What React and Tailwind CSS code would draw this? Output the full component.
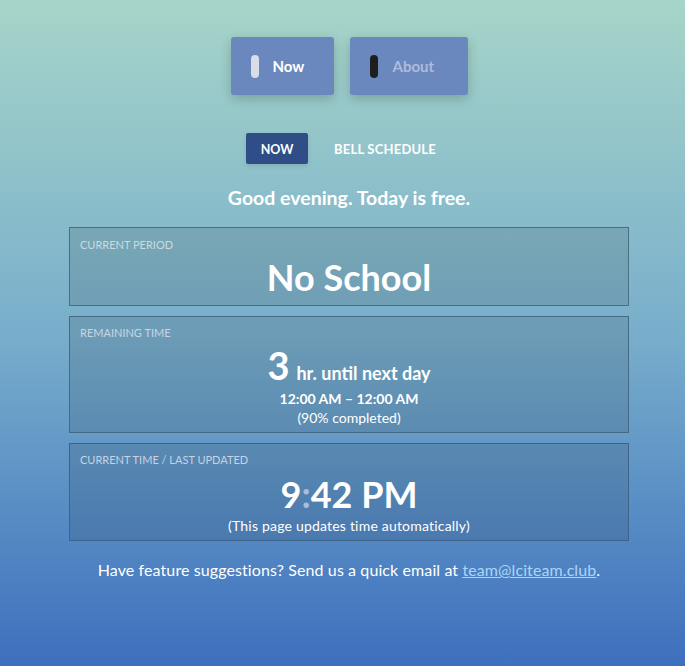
export default function App() {
  const font = { fontFamily: "Lato, 'Open Sans', sans-serif" };
  return (
    <div
      className="min-h-[666px] w-full bg-gradient-to-b from-[#a6d5c8] via-[#79aecb] to-[#3d6fbd] text-white pl-[13px]"
      style={font}
    >
      <div className="flex flex-col items-center pt-[37px]">
        <div className="flex gap-4">
          <div className="flex items-center w-[103px] h-[58px] rounded-[3px] bg-[#6a88be] shadow-[0_4px_12px_rgba(0,0,0,0.2)] pl-5">
            <span className="w-2 h-[23px] rounded-full bg-[#d8dde8]"></span>
            <span className="ml-[14px] text-[15px] font-bold text-white leading-[18px] -mt-[1px]">Now</span>
          </div>
          <div className="flex items-center w-[118px] h-[58px] rounded-[3px] bg-[#6a88be] shadow-[0_4px_12px_rgba(0,0,0,0.2)] pl-5">
            <span className="w-2 h-[23px] rounded-full bg-[#1e1e1e]"></span>
            <span className="ml-[15px] text-[15px] font-bold text-[#aebbdc] leading-[18px] -mt-[1px]">About</span>
          </div>
        </div>

        <div className="flex mt-[38px]">
          <div className="h-[31px] w-[62px] justify-center flex items-center bg-[#2f4e88] rounded-[2px] text-[12.5px] font-bold shadow-[0_2px_4px_rgba(0,0,0,0.1)] pt-[3px]">NOW</div>
          <div className="h-[31px] pl-[26px] pr-4 flex items-center text-[13px] font-bold tracking-[0.2px] pt-[3px]">BELL SCHEDULE</div>
        </div>

        <div className="mt-[22px] text-[19.5px] font-bold leading-[24px]">Good evening. Today is free.</div>

        <div className="w-[560px] mt-[17px] flex flex-col gap-[10px]">
          <div className="h-[79px] border border-[#4a6f82] bg-black/10 px-[10px] pt-[10px]">
            <div className="text-[11px] text-[#c8dbe0] leading-[14px]">CURRENT PERIOD</div>
            <div className="text-center text-[36px] font-bold leading-[40px] mt-[5px]">No School</div>
          </div>

          <div className="h-[117px] border border-[#466a86] bg-black/10 px-[10px] pt-[9px]">
            <div className="text-[11px] text-[#c8d6e2] leading-[14px]">REMAINING TIME</div>
            <div className="flex items-baseline justify-center mt-[7px] leading-[36px]">
              <span className="text-[38px] font-bold">3</span>
              <span className="text-[18px] font-bold ml-[7px]">hr. until next day</span>
            </div>
            <div className="text-center text-[14px] font-bold leading-[18px] -mt-[1px]">12:00 AM – 12:00 AM</div>
            <div className="text-center text-[14px] leading-[18px] mt-[1px]">(90% completed)</div>
          </div>

          <div className="h-[98px] border border-[#3f6289] bg-black/10 px-[10px] pt-[9px]">
            <div className="text-[11px] text-[#c5d3e3] leading-[14px]">CURRENT TIME / LAST UPDATED</div>
            <div className="text-center text-[36px] font-bold leading-[40px] mt-[7px]">
              9<span className="text-[#a6bedb]">:</span>42 PM
            </div>
            <div className="text-center text-[14px] leading-[18px] mt-[3px] tracking-[0.2px]">(This page updates time automatically)</div>
          </div>
        </div>

        <div className="mt-[19px] text-[16px] leading-[20px] tracking-[0.1px]">
          Have feature suggestions? Send us a quick email at{" "}
          <a className="text-[#a9d6f7] underline">team@lciteam.club</a>.
        </div>
      </div>
    </div>
  );
}
